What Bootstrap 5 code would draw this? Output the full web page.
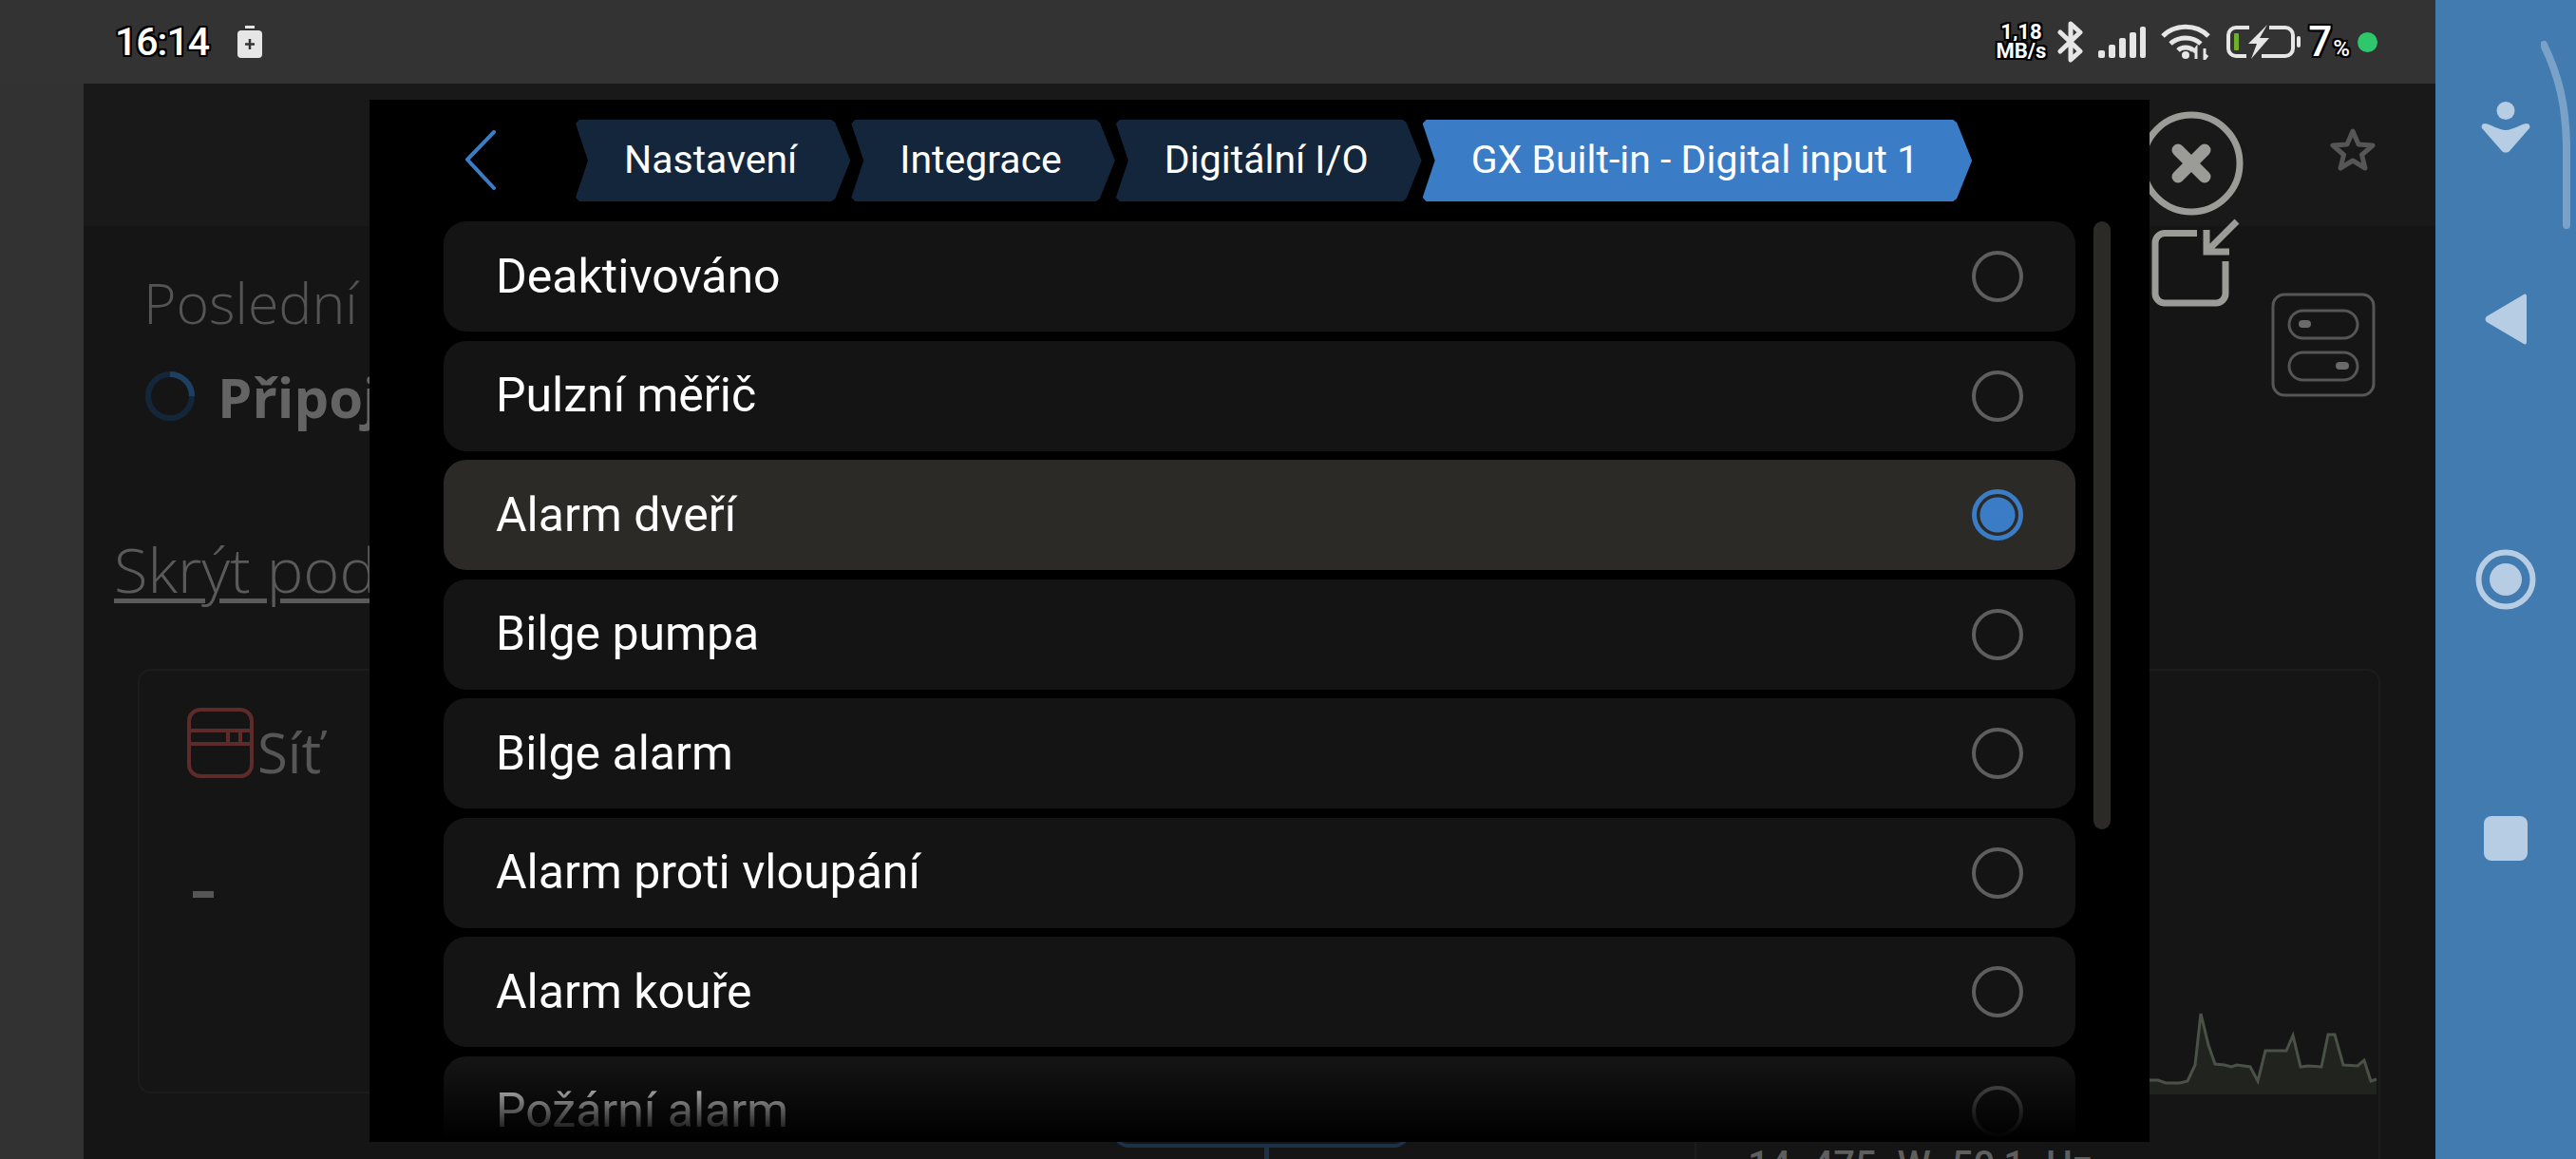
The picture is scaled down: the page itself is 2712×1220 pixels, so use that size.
<!doctype html>
<html lang="cs">
<head>
<meta charset="utf-8">
<title>GX Built-in - Digital input 1</title>
<link href="https://cdn.jsdelivr.net/npm/bootstrap@5.3.0/dist/css/bootstrap.min.css" rel="stylesheet">
<style>
html,body{height:1220px;width:2712px;overflow:hidden;background:#333;margin:0}
body{font-family:Roboto,"Liberation Sans",sans-serif}
.left-col{width:2564px}
.status-bar{height:88px;background:#333;padding-left:121px;padding-right:61px;color:#fff}
.stroked{text-shadow:-2px 0 #000,2px 0 #000,0 -2px #000,0 2px #000,-2px -2px #000,2px 2px #000,-2px 2px #000,2px -2px #000}
.clock{font:500 41px/1 Roboto,sans-serif;letter-spacing:-1px}
.batt-saver{margin-left:30px}
.speed{font:700 22px/20px Roboto,sans-serif;margin-right:12px}
.pct{font:500 44px/1 Roboto,sans-serif}
.pct small{font-size:24px;margin-left:1px}
.live-dot{width:21px;height:21px;background:#2fc76b}
.gutter{width:88px;background:#323232}
.app-area{background:#151515;height:1132px;overflow:hidden}
.app-top{height:150px;background:#191919;padding-right:63px;padding-top:46px}
.app-body{color:#555;font-family:"Open Sans",sans-serif;font-weight:300}
.last-line{height:321px;padding:44px 63px 0 63px}
.last-label{font-size:59px;line-height:72px;color:#545454}
.conn-line{height:72px;margin-top:27px;margin-left:2px;gap:24px;font-size:58px;font-weight:700;color:#646464}
.toggle-box{margin-top:26px}
.hide-link{font-size:65px;line-height:80px;color:#5a5a5a;margin-left:32px;height:80px;text-decoration:underline;text-decoration-thickness:5px;text-underline-offset:6px}
.panel-row{margin:65px 58px 0 57px;gap:38px}
.panel{background:transparent;border:2px solid #1c1c1c;border-radius:14px}
.panel-a{width:620px;height:447px;padding:39px 50px}
.panel-b{flex:1;height:506px;border-color:transparent;position:relative}
.panel-c{width:722px;height:600px;display:flex;flex-direction:column;position:relative}
.grid-name{font-size:58px;line-height:72px;color:#565656;font-weight:400;margin-top:11px}
.grid-dash{width:22px;height:7px;background:#555;margin:110px 0 0 6px}
.blue-box{position:absolute;left:367px;bottom:0;width:312px;height:90px;border:4px solid #1d3248;border-top:0;border-radius:0 0 16px 16px}
.blue-stem{position:absolute;left:526px;top:100%;width:5px;height:12px;background:#1d3248}
.spark{margin-top:352px;display:block}
.panel-val{font:500 40px/44px Roboto,sans-serif;color:#5e5e5e;padding:53px 0 0 54px;word-spacing:12px;white-space:nowrap}
.side-nav{width:148px;height:1220px;background:#417bb0;padding-top:107px;position:relative}
.nav-curve{position:absolute;left:111px;top:42px}
.nav-back{margin-top:148px}.nav-home{margin-top:215px}.nav-square{width:46px;height:47px;background:#b6cde4;border-radius:8px;margin-top:217px}
.over-icon{position:absolute}
.close-icon{left:2163px;top:28px}
.shrink-icon{left:2177px;top:137px}
.modal-sheet{position:absolute;left:301px;top:17px;width:1874px;height:1097px;background:#000;overflow:hidden;z-index:5}
.sheet-head{height:128px;padding:21px 0 0 100px}
.back-chev{width:33px;height:63px;margin:11px 84px 0 0;flex:none}
.crumbs{gap:1px;height:86px}
.crumb{height:86px;padding:0 56px 0 51px;font-size:41px;color:#fff;background:#13263b;white-space:nowrap;clip-path:polygon(4px 0,calc(100% - 20px) 0,calc(100% - 16px) 3px,100% 50%,calc(100% - 16px) calc(100% - 3px),calc(100% - 20px) 100%,4px 100%,0 calc(100% - 4px),13px 50%,0 4px)}
.crumb-on{background:#3b7cc6}
.option-list{margin-left:78px;width:1718px;gap:9.55px;--bs-list-group-border-width:0}
.option-list .list-group-item{height:116px;background:#141414;color:#fff;border:0;border-radius:24px;padding:0 55px 0 55px;font-size:50px;flex:none}
.option-list .list-group-item.picked{background:#2b2a26}
.option-list .form-check-input{width:54px;height:54px;margin:0;background:transparent;border:4px solid #5e5e5e;flex:none}
.option-list .form-check-input:checked[type=radio]{background-image:radial-gradient(circle,#3b7cc6 18px,transparent 19px);border:5px solid #3b7cc6}
.sheet-scroll{position:absolute;left:1815px;top:128px;width:18px;height:640px;background:#2b2a26;border-radius:9px}
.sheet-fade{position:absolute;left:0;right:0;bottom:0;height:85px;background:linear-gradient(to bottom,rgba(0,0,0,0),#000 95%)}
</style>
</head>
<body>
<div class="d-flex">
  <div class="left-col d-flex flex-column">
    <div class="status-bar d-flex align-items-center">
      <span class="clock stroked">16:14</span>
      <svg class="batt-saver" width="26" height="34" viewBox="0 0 26 34"><rect x="8" y="0" width="10" height="3" fill="#e6e6e6"/><rect y="5" width="26" height="29" rx="4" fill="#e6e6e6"/><path d="M13 14v11M8 19.500h10" stroke="#333" stroke-width="2.500"/></svg>
      <div class="ms-auto d-flex align-items-center">
        <span class="speed stroked text-center">1,18<br>MB/s</span>
        <svg width="27" height="44" viewBox="0 0 27 44" fill="none" stroke="#e6e6e6" stroke-width="5" stroke-linejoin="round" stroke-linecap="round"><path d="M3 12l21 20-10 9V3l10 9L3 32"/></svg>
        <svg class="ms-3" width="50" height="33" viewBox="0 0 50 33" fill="#e6e6e6"><rect y="25" width="7" height="8" rx="2"/><rect x="11" y="19" width="7" height="14" rx="2"/><rect x="22" y="12" width="7" height="21" rx="2"/><rect x="33" y="6" width="7" height="27" rx="2"/><rect x="44" y="0" width="6" height="33" rx="2"/></svg>
        <svg class="ms-3" width="52" height="38" viewBox="0 0 52 38" fill="none" stroke="#e6e6e6" stroke-width="5"><path d="M2 13C15 0 37 0 50 13M10 21c9-8 23-8 32 0M18 28c4-4 12-4 16 0"/><circle cx="26" cy="33" r="4" fill="#e6e6e6" stroke="none"/><path d="M37 37V26l-3 4M46 26v11l3-4" stroke-width="3"/></svg>
        <svg class="ms-3" width="79" height="36" viewBox="0 0 79 36" fill="none"><path d="M25 3H11a8 8 0 0 0-8 8v14a8 8 0 0 0 8 8h11M46 3h17a8 8 0 0 1 8 8v14a8 8 0 0 1-8 8H38" stroke="#e6e6e6" stroke-width="4"/><rect x="9" y="9" width="5" height="18" rx="1" fill="#6fb02b"/><path d="M44 0L24 20h9l-6 16 19-22H36z" fill="#e6e6e6"/><rect x="75" y="12" width="4" height="12" rx="2" fill="#e6e6e6"/></svg>
        <span class="pct stroked ms-2">7<small>%</small></span>
        <span class="live-dot rounded-circle ms-2"></span>
      </div>
    </div>
    <div class="d-flex position-relative">
      <div class="gutter"></div>
      <div class="app-area flex-grow-1 position-relative">
        <div class="app-top d-flex justify-content-end">
          <svg width="48" height="46" viewBox="0 0 48 46" fill="none" stroke="#565656" stroke-width="5" stroke-linejoin="round"><path d="M24 4l6 14 15 1-11.500 10L37 43 24 35 11 43l3.500-14L3 19l15-1z"/></svg>
        </div>
        <div class="app-body">
          <div class="last-line d-flex justify-content-between">
            <div>
              <div class="last-label">Poslední</div>
              <div class="conn-line d-flex align-items-center">
                <svg width="52" height="52" viewBox="0 0 52 52" fill="none" stroke-width="6"><circle cx="26" cy="26" r="23" stroke="#14263a"/><path d="M26 3a23 23 0 0 1 23 23" stroke="#1d4062"/></svg>
                <span>Připoj</span>
              </div>
            </div>
            <svg class="toggle-box" width="110" height="110" viewBox="0 0 110 110" fill="none" stroke="#565656" stroke-width="3"><rect x="2" y="2" width="106" height="106" rx="12"/><rect x="19" y="19" width="72" height="29" rx="14.500"/><rect x="19" y="63" width="72" height="29" rx="14.500"/><rect x="29" y="29" width="13" height="8" rx="4" fill="#6a6a6a" stroke="none"/><rect x="68" y="73" width="14" height="8" rx="4" fill="#6a6a6a" stroke="none"/></svg>
          </div>
          <div class="hide-link">Skrýt pod</div>
          <div class="panel-row d-flex">
            <div class="panel panel-a">
              <div class="d-flex align-items-start gap-1">
                <svg width="70" height="74" viewBox="0 0 70 74" fill="none" stroke="#5e2a2a" stroke-width="4"><rect x="2" y="2" width="66" height="70" rx="12"/><path d="M2 24h66M2 38h66M43 24v14M56 24v14"/></svg>
                <span class="grid-name">Síť</span>
              </div>
              <div class="grid-dash"></div>
            </div>
            <div class="panel panel-b"><div class="blue-box"></div><div class="blue-stem"></div></div>
            <div class="panel panel-c">
              <svg class="spark ms-auto" width="242" height="94" viewBox="0 0 242 94"><path d="M0 79L10 79 18 82 33 82 41 80 49 63 55 9 63 42 70 62 80 63 87 65 93 63 107 65 115 80 123 48 145 48 152 32 160 65 168 64 182 65 189 31 196 31 205 63 220 64 227 58 234 80 240 78V94H0z" fill="#20231e"/><path d="M0 79L10 79 18 82 33 82 41 80 49 63 55 9 63 42 70 62 80 63 87 65 93 63 107 65 115 80 123 48 145 48 152 32 160 65 168 64 182 65 189 31 196 31 205 63 220 64 227 58 234 80 240 78" fill="none" stroke="#4a5247" stroke-width="3"/></svg>
              <div class="panel-val">14 475 W 50,1 Hz</div>
            </div>
          </div>
        </div>
        <svg class="over-icon shrink-icon" width="95" height="100" viewBox="0 0 95 100" fill="none" stroke="#9b9b98" stroke-width="7"><path d="M48 20.500H14a10 10 0 0 0-10 10V84a10 10 0 0 0 10 10H68a10 10 0 0 0 10-10V50"/><path d="M58 17V40H82M58 40L90 8"/></svg>
        <svg class="over-icon close-icon" width="112" height="112" viewBox="0 0 112 112" fill="none" stroke="#9b9b98"><circle cx="56" cy="56" r="51" stroke-width="7"/><path d="M42 42l28 28M70 42L42 70" stroke-width="13" stroke-linecap="round"/></svg>
        <div class="modal-sheet">
          <div class="sheet-head d-flex align-items-start">
            <svg class="back-chev" viewBox="0 0 33 63" fill="none" stroke="#3b7cc6" stroke-width="4" stroke-linecap="round" stroke-linejoin="round"><path d="M31 2L3 31l28 30"/></svg>
            <div class="crumbs d-flex">
              <div class="crumb d-flex align-items-center">Nastavení</div>
              <div class="crumb d-flex align-items-center">Integrace</div>
              <div class="crumb d-flex align-items-center">Digitální I/O</div>
              <div class="crumb crumb-on d-flex align-items-center">GX Built-in - Digital input 1</div>
            </div>
          </div>
          <div class="list-group option-list">
            <label class="list-group-item d-flex align-items-center justify-content-between">Deaktivováno<input class="form-check-input" type="radio" name="func"></label>
            <label class="list-group-item d-flex align-items-center justify-content-between">Pulzní měřič<input class="form-check-input" type="radio" name="func"></label>
            <label class="list-group-item picked d-flex align-items-center justify-content-between">Alarm dveří<input class="form-check-input" type="radio" name="func" checked></label>
            <label class="list-group-item d-flex align-items-center justify-content-between">Bilge pumpa<input class="form-check-input" type="radio" name="func"></label>
            <label class="list-group-item d-flex align-items-center justify-content-between">Bilge alarm<input class="form-check-input" type="radio" name="func"></label>
            <label class="list-group-item d-flex align-items-center justify-content-between">Alarm proti vloupání<input class="form-check-input" type="radio" name="func"></label>
            <label class="list-group-item d-flex align-items-center justify-content-between">Alarm kouře<input class="form-check-input" type="radio" name="func"></label>
            <label class="list-group-item d-flex align-items-center justify-content-between">Požární alarm<input class="form-check-input" type="radio" name="func"></label>
          </div>
          <div class="sheet-scroll"></div>
          <div class="sheet-fade"></div>
        </div>
      </div>
    </div>
  </div>
  <div class="side-nav d-flex flex-column align-items-center">
    <svg width="54" height="54" viewBox="0 0 54 54" fill="#b6cde4"><circle cx="27" cy="9.500" r="9.500"/><path d="M5 23C12 24 20 30 27 30 34 30 42 24 49 23 52 23 53 26 52 28L31 52C29 54 25 54 23 52L2 28C1 26 2 23 5 23z"/></svg>
    <svg class="nav-back" width="44" height="54" viewBox="0 0 44 54" fill="#b6cde4"><path d="M41 1c2-1 3 0 3 2v48c0 2-1 3-3 2L2 30c-2-2-2-4 0-6z"/></svg>
    <svg class="nav-home" width="64" height="64" viewBox="0 0 64 64" fill="none"><circle cx="32" cy="32" r="28.500" stroke="#b6cde4" stroke-width="6"/><circle cx="32" cy="32" r="17" fill="#b6cde4"/></svg>
    <div class="nav-square"></div>
    <svg class="nav-curve" width="32" height="200" viewBox="0 0 32 200" fill="none"><path d="M3 5C20 40 26 70 27 110V195" stroke="#7aa2c8" stroke-width="8" stroke-linecap="round"/></svg>
  </div>
</div>
</body>
</html>
